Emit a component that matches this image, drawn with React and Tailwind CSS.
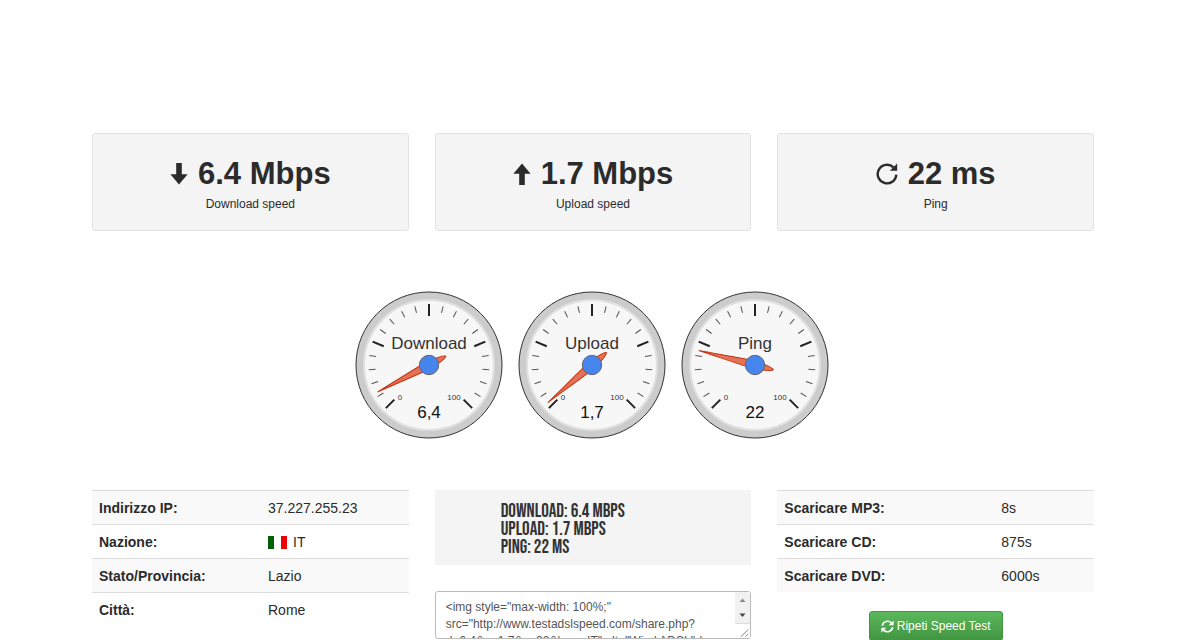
const results = [
  { icon: 'down', value: '6.4 Mbps', label: 'Download speed' },
  { icon: 'up', value: '1.7 Mbps', label: 'Upload speed' },
  { icon: 'repeat', value: '22 ms', label: 'Ping' }
];

const gauges = [
  { name: 'Download', value: 6.4, text: '6,4' },
  { name: 'Upload', value: 1.7, text: '1,7' },
  { name: 'Ping', value: 22, text: '22' }
];

const connection = [
  { label: 'Indirizzo IP:', value: '37.227.255.23' },
  { label: 'Nazione:', value: 'IT', flag: true },
  { label: 'Stato/Provincia:', value: 'Lazio' },
  { label: 'Città:', value: 'Rome' }
];

const downloads = [
  { label: 'Scaricare MP3:', value: '8s' },
  { label: 'Scaricare CD:', value: '875s' },
  { label: 'Scaricare DVD:', value: '6000s' }
];

const embedCode =
  '<img style="max-width: 100%;" src="http://www.testadslspeed.com/share.php?d=6.4&u=1.7&p=22&lang=IT" alt="Wind ADSL" />';

function ResultIcon({ name }) {
  if (name === 'repeat') {
    return (
      <svg viewBox="0 0 22 22" className="h-[22px] w-[22px]" aria-hidden="true">
        <path d="M17.5 4.4A9.3 9.3 0 1 0 20.3 11.6" fill="none" stroke="currentColor" strokeWidth="2.4" />
        <path d="M21.2 0.4v7.4h-7.4z" fill="currentColor" />
      </svg>
    );
  }
  return (
    <svg viewBox="0 0 18 22" className={name === 'up' ? 'h-[22px] w-[18px] rotate-180' : 'h-[22px] w-[18px]'} aria-hidden="true">
      <path d="M6.2 0h5.6v11.2h5.8L9 21.4 0.4 11.2h5.8z" fill="currentColor" />
    </svg>
  );
}

function RefreshIcon() {
  return (
    <svg viewBox="0 0 13 13" className="h-[13px] w-[13px]" aria-hidden="true">
      <g fill="none" stroke="currentColor" strokeWidth="1.6">
        <path d="M1.3 5.8A5.3 5.3 0 0 1 10.4 2.9" />
        <path d="M11.7 7.2A5.3 5.3 0 0 1 2.6 10.1" />
      </g>
      <path d="M12.6 0.4v4.9H7.7zM0.4 12.6V7.7h4.9z" fill="currentColor" />
    </svg>
  );
}

function ResultCard({ item }) {
  return (
    <div className="rounded-[3px] border border-[#e3e3e3] bg-[#f4f4f4] px-5 pt-5 pb-4 text-center">
      <h2 className="flex items-center justify-center gap-[10px] text-[31px] leading-10 font-bold">
        <ResultIcon name={item.icon} />
        {item.value}
      </h2>
      <p className="text-xs leading-5">{item.label}</p>
    </div>
  );
}

// the scale starts at -135 degrees and covers 270 degrees clockwise
function Gauge({ gauge }) {
  const ticks = [];
  for (let i = 0; i <= 20; i++) {
    ticks.push({ angle: -135 + i * 13.5, major: i % 5 === 0 });
  }
  const needle = -135 + gauge.value * 2.7;

  return (
    <svg viewBox="0 0 148 148" className="h-[148px] w-[148px]" role="img" aria-label={gauge.name}>
      <circle cx="74" cy="74" r="73" fill="#cccccc" stroke="#333333" />
      <circle cx="74" cy="74" r="65" fill="#f7f7f7" stroke="#e0e0e0" strokeWidth="2" />
      {ticks.map((t) => (
        <line
          key={t.angle}
          x1="74"
          x2="74"
          y1={t.major ? 13 : 13.6}
          y2={t.major ? 25 : 20.4}
          stroke={t.major ? '#222222' : '#555555'}
          strokeWidth={t.major ? 2 : 1}
          transform={`rotate(${t.angle} 74 74)`}
        />
      ))}
      <g fill="#333333" textAnchor="middle" fontFamily="'Liberation Sans', Arial, sans-serif">
        <text x="74" y="58" fontSize="17">{gauge.name}</text>
        <text x="45" y="109" fontSize="8">0</text>
        <text x="99" y="109" fontSize="8">100</text>
        <text x="74" y="127" fontSize="17" fill="#111111">{gauge.text}</text>
      </g>
      <path
        d="M74 16C75 32 77 55 78 74C77 84 76 92 74 93C72 92 71 84 70 74C71 55 73 32 74 16Z"
        fill="#dc3912"
        fillOpacity="0.7"
        stroke="#c63310"
        strokeWidth="1"
        transform={`rotate(${needle} 74 74)`}
      />
      <circle cx="74" cy="74" r="9.7" fill="#4684ee" stroke="#666666" />
    </svg>
  );
}

function ItalyFlag() {
  return (
    <svg viewBox="0 0 19 13" className="h-[13px] w-[19px]" aria-hidden="true">
      <path d="M0 0h6v13H0z" fill="#006000" />
      <path d="M13 0h6v13h-6z" fill="#f00000" />
    </svg>
  );
}

function InfoTable({ rows, labelWidth }) {
  return (
    <table className="w-full table-fixed border-collapse text-sm leading-5">
      <tbody>
        {rows.map((row) => (
          <tr key={row.label} className="border-t border-[#dddddd] odd:bg-[#f9f9f9]">
            <th scope="row" className={`${labelWidth} px-[7px] pt-[7px] pb-[6px] text-left font-bold`}>
              {row.label}
            </th>
            <td className="px-[7px] pt-[7px] pb-[6px]">
              <span className="flex items-center gap-[6px]">
                {row.flag && <ItalyFlag />}
                {row.value}
              </span>
            </td>
          </tr>
        ))}
      </tbody>
    </table>
  );
}

function EmbedBox() {
  return (
    <div className="relative mt-[26px]">
      <textarea
        aria-label="Codice da incorporare"
        defaultValue={embedCode}
        className="block h-12 w-full resize-none overflow-hidden rounded-[3px] border border-[#bbbbbb] pt-[7px] pr-6 pl-[10px] text-xs leading-[17px] text-[#555555]"
      />
      {/* scroll buttons and resize grip */}
      <div className="pointer-events-none absolute top-px right-px bottom-px flex w-[15px] flex-col bg-[#f1f1f1]">
        <svg viewBox="0 0 15 31" className="h-[31px] w-[15px]" aria-hidden="true">
          <path d="M4.5 10L7.5 6.5 10.5 10z" fill="#8a8a8a" />
          <path d="M4.5 21.5L7.5 25 10.5 21.5z" fill="#444444" />
        </svg>
        <svg viewBox="0 0 15 15" className="h-[15px] w-[15px] border-t border-[#dddddd] bg-white" aria-hidden="true">
          <path d="M6 13.5L13.5 6M10.5 13.5L13.5 10.5" stroke="#777777" />
        </svg>
      </div>
    </div>
  );
}

export default function App() {
  return (
    <main className="h-screen overflow-hidden bg-white pt-[133px] pr-[106px] pl-[92px] font-['Liberation_Sans',Arial,sans-serif] text-[#2b2b2b]">
      <section className="grid grid-cols-3 gap-[26px]">
        {results.map((item) => (
          <ResultCard key={item.label} item={item} />
        ))}
      </section>

      <section className="mt-[60px] flex justify-center gap-[15px] pr-[2px]">
        {gauges.map((gauge) => (
          <Gauge key={gauge.name} gauge={gauge} />
        ))}
      </section>

      <section className="mt-[51px] grid grid-cols-3 items-start gap-[26px]">
        <InfoTable rows={connection} labelWidth="w-[169px]" />

        <div>
          <div className="bg-[#f4f4f4] pt-[13px] pb-2 pl-[66px] font-['Bebas_Neue','Liberation_Sans_Narrow',sans-serif] text-[19px] leading-[18px] text-[#333333] uppercase">
            <p>Download: 6.4 Mbps</p>
            <p>Upload: 1.7 Mbps</p>
            <p>Ping: 22 ms</p>
          </div>
          <EmbedBox />
        </div>

        <div className="text-center">
          <InfoTable rows={downloads} labelWidth="w-[217px]" />
          <button
            type="button"
            className="mt-[19px] inline-flex items-center gap-[3px] rounded-[3px] border border-[#419641] bg-linear-to-b from-[#5cb85c] to-[#419641] px-[11px] py-1 text-xs leading-5 text-white"
          >
            <RefreshIcon />
            Ripeti Speed Test
          </button>
        </div>
      </section>
    </main>
  );
}
